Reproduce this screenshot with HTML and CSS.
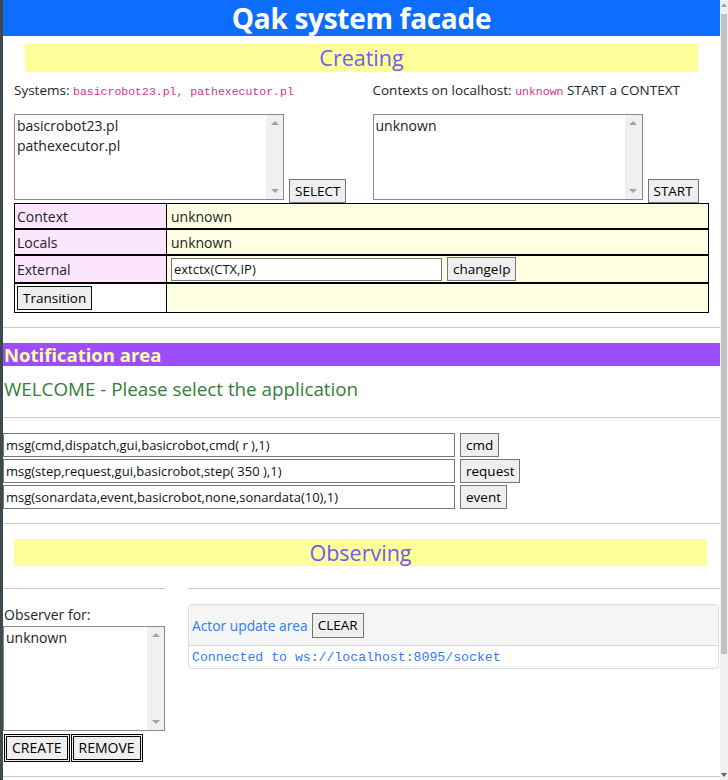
FILE: index.html
```html
<!DOCTYPE html>
<html>
<head>
<meta charset="utf-8">
<title>Qak system facade</title>
<link rel="stylesheet" href="styles.css">
</head>
<body>
<div class="edge"></div>
<div class="page">
  <header class="topbar">Qak system facade</header>

  <section class="creating">
    <h2 class="band band-c">Creating</h2>
    <div class="pickers">
      <div class="picker">
        <p class="caption">Systems: <code class="code">basicrobot23.pl, pathexecutor.pl</code></p>
        <div class="pick-row">
          <div class="listbox lb-pick">
            <div class="opts"><div>basicrobot23.pl</div><div>pathexecutor.pl</div></div>
            <div class="vscroll"><span class="arr up"></span><span class="arr down"></span></div>
          </div>
          <button class="btn">SELECT</button>
        </div>
      </div>
      <div class="picker">
        <p class="caption">Contexts on localhost: <code class="code">unknown</code> START a CONTEXT</p>
        <div class="pick-row">
          <div class="listbox lb-pick">
            <div class="opts"><div>unknown</div></div>
            <div class="vscroll"><span class="arr up"></span><span class="arr down"></span></div>
          </div>
          <button class="btn">START</button>
        </div>
      </div>
    </div>

    <div class="ctx-table">
      <div class="trow r-1st"><div class="key">Context</div><div class="val">unknown</div></div>
      <div class="trow r-a"><div class="key">Locals</div><div class="val">unknown</div></div>
      <div class="trow r-b"><div class="key">External</div><div class="val"><input class="field ext" value="extctx(CTX,IP)"><button class="btn">changeIp</button></div></div>
      <div class="trow r-c"><div class="key plain"><button class="btn dark">Transition</button></div><div class="val"></div></div>
    </div>
  </section>

  <hr class="rule r-1">

  <section class="notify">
    <h3 class="notify-band">Notification area</h3>
    <p class="welcome">WELCOME - Please select the application</p>
  </section>

  <hr class="rule r-2">

  <section class="msgs">
    <div class="msg-row"><input class="field msg" value="msg(cmd,dispatch,gui,basicrobot,cmd( r ),1)"><button class="btn">cmd</button></div>
    <div class="msg-row"><input class="field msg" value="msg(step,request,gui,basicrobot,step( 350 ),1)"><button class="btn">request</button></div>
    <div class="msg-row"><input class="field msg" value="msg(sonardata,event,basicrobot,none,sonardata(10),1)"><button class="btn">event</button></div>
  </section>

  <hr class="rule r-3">

  <section class="observing">
    <h2 class="band band-o">Observing</h2>
    <div class="obs-grid">
      <div class="obs-left">
        <hr class="rule">
        <p class="obs-label">Observer for:</p>
        <div class="listbox lb-obs">
          <div class="opts"><div>unknown</div></div>
          <div class="vscroll"><span class="arr up"></span><span class="arr down"></span></div>
        </div>
        <div class="obs-btns"><button class="btn dbl">CREATE</button><button class="btn dbl">REMOVE</button></div>
      </div>
      <div class="obs-right">
        <hr class="rule">
        <div class="card">
          <div class="card-head"><span class="card-title">Actor update area</span><button class="btn">CLEAR</button></div>
          <div class="card-body"><code class="mono">Connected to ws://localhost:8095/socket</code></div>
        </div>
      </div>
    </div>
  </section>

  <hr class="rule r-4">
</div>
<div class="scrollbar">
  <span class="sb-arrow up"></span>
  <div class="thumb"></div>
  <div class="sb-fill"></div>
  <span class="sb-arrow down"></span>
</div>
</body>
</html>
```

FILE: styles.css
```css
* { box-sizing: border-box; }
html, body { margin: 0; height: 780px; overflow: hidden; }
body {
  display: flex;
  font-family: "Open Sans", "Noto Sans", sans-serif;
  font-size: 14px;
  color: #212529;
  background: #fff;
}
.edge { width: 3px; flex: none; background: #3d4b4d; }
.page { flex: 1; min-width: 0; }

.scrollbar {
  width: 8px; flex: none; background: #f0f0f0;
  display: flex; flex-direction: column; align-items: center;
}
.sb-arrow { width: 0; height: 0; border-left: 3px solid transparent; border-right: 3px solid transparent; margin: 3px 0; }
.sb-arrow.up { border-bottom: 4px solid #a0a0a0; }
.sb-arrow.down { border-top: 4px solid #606060; }
.thumb { width: 6px; height: 640px; background: #c1c1c1; margin-top: 4px; }
.sb-fill { flex: 1; }

.topbar {
  height: 36px; line-height: 36px; background: #0d6efd; color: #fff;
  text-align: center; font-weight: 700; font-size: 28px; letter-spacing: -0.3px;
}

.band {
  margin: 0; background: #ffff99; color: #6b5cf6; text-align: center;
  font-weight: 500; font-size: 21.5px;
}

.creating { padding: 0 11px; }
.band-c { margin: 8px 11px 0; height: 28px; line-height: 28px; }

.pickers { display: grid; grid-template-columns: 1fr 1fr; gap: 0 22px; }
.caption { margin: 9px 0 0; height: 18px; line-height: 18px; font-size: 13.5px; }
.code { font-family: "Liberation Mono", monospace; font-size: 11.5px; line-height: 1; color: #d63384; }

.pick-row { display: flex; align-items: flex-end; gap: 5px; margin-top: 15px; }
.listbox {
  display: flex; border: 1px solid #8a8a8a; background: #fff;
}
.lb-pick { width: 270px; height: 86px; margin-bottom: 3px; }
.opts { flex: 1; padding: 1px 2px; font-size: 14px; line-height: 20px; color: #222; }
.vscroll {
  width: 17px; background: #f0f0f0; display: flex; flex-direction: column;
  align-items: center; justify-content: space-between; padding: 6px 0;
}
.arr { width: 0; height: 0; border-left: 4px solid transparent; border-right: 4px solid transparent; }
.arr.up { border-bottom: 4px solid #a3a3a3; }
.arr.down { border-top: 4px solid #a3a3a3; }

.btn {
  font-family: inherit; font-size: 13.5px; color: #000; background: #efefef;
  border: 1px solid #767676; border-radius: 0; height: 24px; padding: 0 5px; line-height: 20px;
}
.btn.dark { border-color: #111; }
.btn.dbl { border: 3px double #000; height: 28px; padding: 0 5px; font-size: 14px; }

.ctx-table { border: 1px solid #000; margin-top: 0; }
.trow { display: grid; grid-template-columns: 152px 1fr; }
.trow + .trow { border-top: 2px solid #000; }
.r-1st { height: 24px; }
.r-a { height: 26px; }
.r-b { height: 28px; }
.r-c { height: 30px; }
.key { background: #fde6fd; border-right: 1px solid #000; padding-left: 2px; display: flex; align-items: center; }
.key.plain { background: #fff; padding-left: 2px; }
.val { background: #ffffe2; padding-left: 4px; display: flex; align-items: center; gap: 5px; }
.field {
  font-family: inherit; font-size: 13px; color: #111; height: 23px;
  border: 1px solid #767676; padding: 0 2px; background: #fff;
}
.ext { width: 271px; }

.rule { border: 0; border-top: 1px solid #c8c8c8; margin: 0; }
.r-1 { margin-top: 14px; }
.notify-band {
  margin: 15px 0 0; height: 23px; line-height: 23px; background: #9b4dff;
  color: #ffffa6; font-weight: 700; font-size: 18.5px; padding-left: 1px;
}
.welcome { margin: 9px 0 0; line-height: 28px; font-size: 18.8px; color: #347d3a; padding-left: 1px; }
.r-2 { margin-top: 14px; }

.msgs { padding-top: 15px; display: flex; flex-direction: column; gap: 2px; }
.msg-row { display: flex; align-items: center; gap: 5px; }
.msg { width: 452px; height: 24px; }
.r-3 { margin-top: 14px; }

.band-o { margin: 15px 13px 0 11px; height: 27px; line-height: 27px; }
.obs-grid { display: grid; grid-template-columns: 162px 1fr; gap: 23px; margin-top: 22px; }
.obs-label { margin: 16px 0 0 1px; line-height: 20px; }
.lb-obs { width: 162px; height: 105px; margin-top: 1px; }
.obs-btns { display: flex; gap: 1px; margin-top: 3px; padding-left: 1px; }

.card {
  margin-top: 15px; margin-right: 1px; border: 1px solid rgba(0,0,0,.13); border-radius: 4px; overflow: hidden;
}
.card-head {
  height: 41px; background: #f5f5f5; border-bottom: 1px solid rgba(0,0,0,.13);
  display: flex; align-items: center; gap: 4px; padding-left: 3px;
}
.card-title { color: #2f7bf5; font-size: 13.8px; }
.card-head .btn { height: 25px; }
.card-body { height: 22px; padding-left: 3px; display: flex; align-items: center; }
.mono { font-family: "Liberation Mono", monospace; font-size: 13.2px; color: #2f7bf5; }
.r-4 { margin-top: 14px; }
```
